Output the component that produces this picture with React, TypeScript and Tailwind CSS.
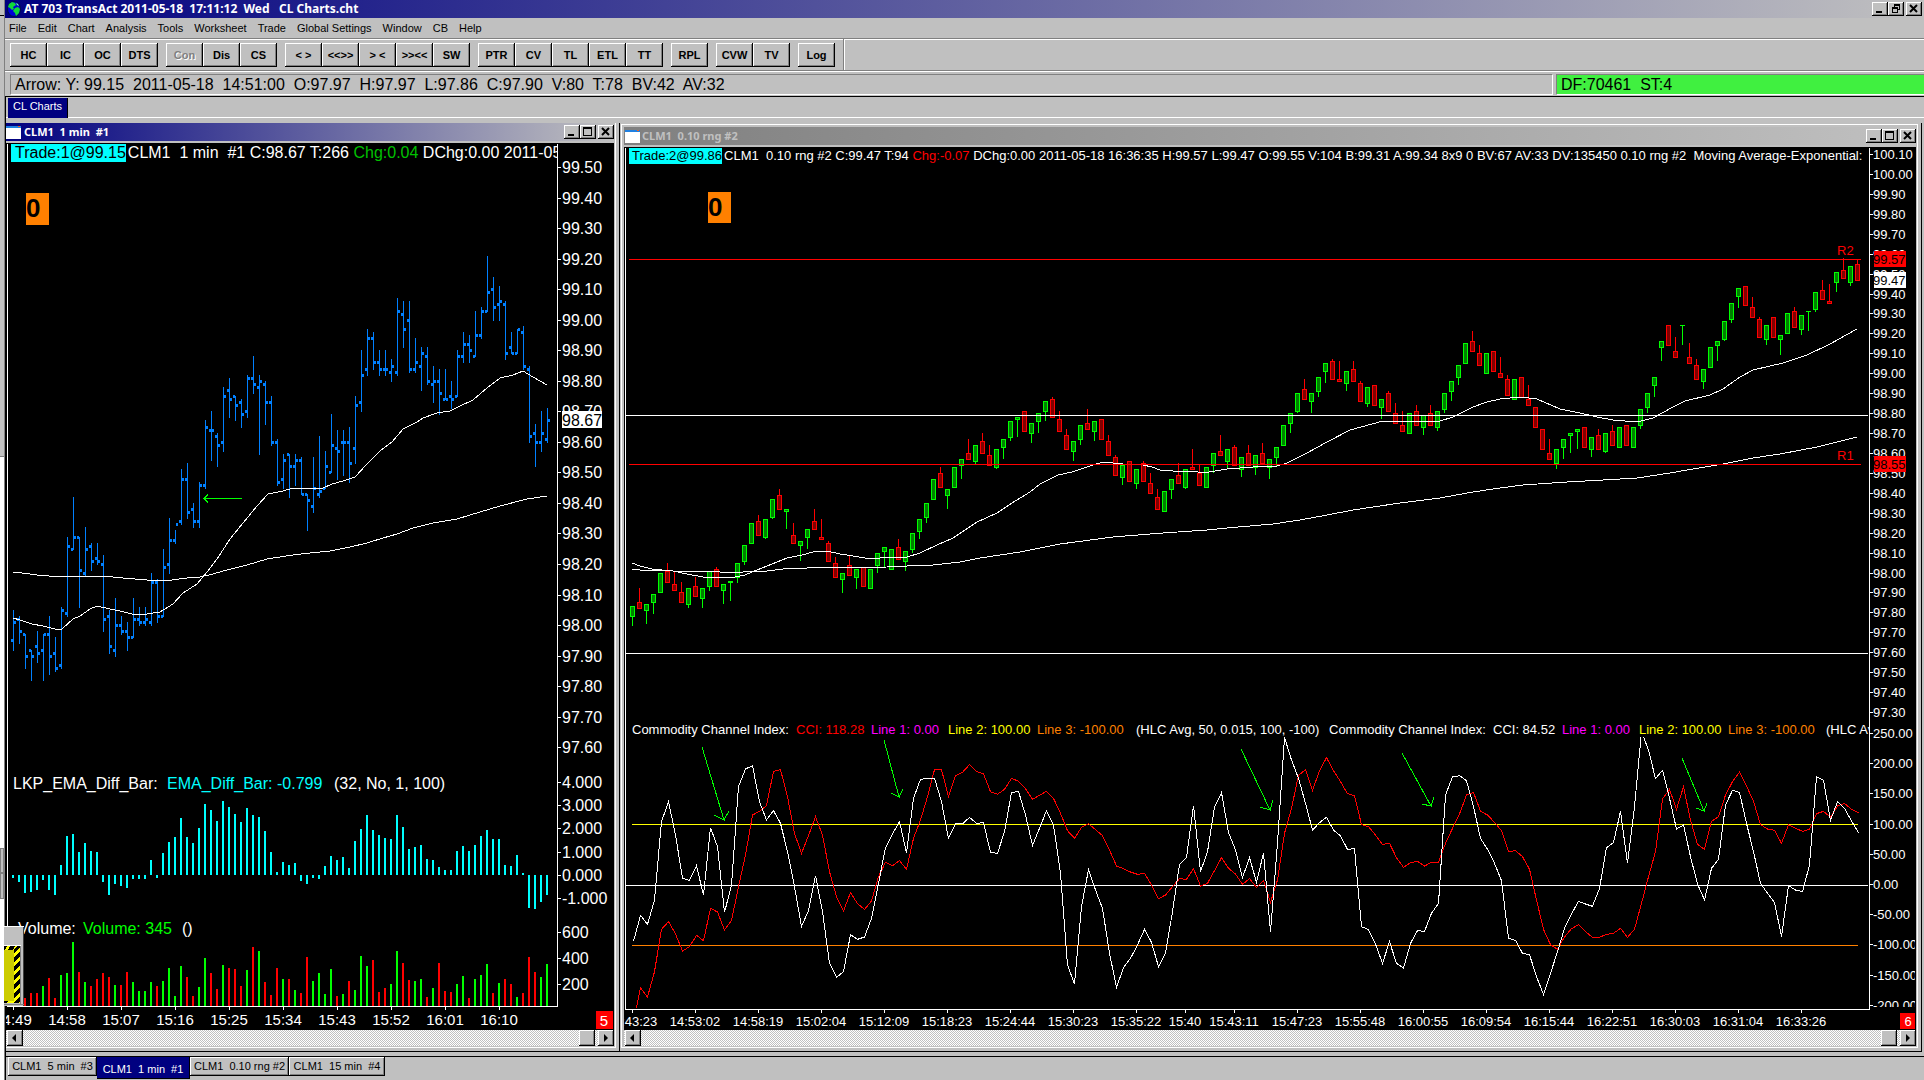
import React from 'react';

type Point = [number, number];

const BLUE = '#0080ff';
const CYAN = '#00ffff';
const RED = '#ff0000';
const GREEN = '#00ff00';

const MENU = ['File', 'Edit', 'Chart', 'Analysis', 'Tools', 'Worksheet', 'Trade', 'Global Settings', 'Window', 'CB', 'Help'];

const TOOLBAR = [
  ['HC', 'IC', 'OC', 'DTS'],
  ['Con', 'Dis', 'CS'],
  ['< >', '<<>>', '> <', '>><<', 'SW'],
  ['PTR', 'CV', 'TL', 'ETL', 'TT'],
  ['RPL'],
  ['CVW', 'TV'],
  ['Log'],
];

// open, high, low, close in ticks of 0.01
const MINUTE_BARS = [
  [9795, 9805, 9792, 9801], [9802, 9803, 9794, 9798], [9797, 9797, 9786, 9790], [9792, 9792, 9782, 9790], [9793, 9798, 9788, 9791],
  [9792, 9797, 9782, 9797], [9797, 9803, 9784, 9790], [9791, 9796, 9785, 9786], [9787, 9806, 9786, 9805], [9804, 9829, 9803, 9826],
  [9825, 9842, 9825, 9829], [9829, 9829, 9806, 9818], [9817, 9832, 9816, 9825], [9826, 9827, 9818, 9821], [9822, 9827, 9820, 9821],
  [9820, 9823, 9798, 9802], [9803, 9805, 9791, 9793], [9792, 9809, 9790, 9800], [9800, 9803, 9797, 9798], [9798, 9801, 9792, 9796],
  [9796, 9809, 9796, 9802], [9802, 9806, 9800, 9801], [9801, 9806, 9800, 9802], [9801, 9817, 9800, 9814], [9814, 9815, 9801, 9803],
  [9803, 9825, 9803, 9819], [9820, 9835, 9817, 9828], [9828, 9831, 9827, 9833], [9834, 9851, 9833, 9848], [9848, 9853, 9835, 9837],
  [9838, 9840, 9832, 9834], [9834, 9847, 9832, 9846], [9846, 9867, 9845, 9865], [9864, 9870, 9854, 9864], [9862, 9863, 9852, 9859],
  [9860, 9878, 9857, 9875], [9877, 9881, 9868, 9874], [9875, 9875, 9867, 9872], [9873, 9874, 9865, 9869], [9870, 9882, 9868, 9881],
  [9881, 9888, 9876, 9879], [9878, 9882, 9856, 9880], [9879, 9880, 9866, 9873], [9873, 9875, 9859, 9860], [9860, 9861, 9846, 9847],
  [9848, 9856, 9845, 9854], [9856, 9856, 9842, 9852], [9852, 9856, 9846, 9854], [9854, 9855, 9843, 9843], [9843, 9843, 9831, 9841],
  [9839, 9855, 9837, 9845], [9843, 9862, 9842, 9844], [9845, 9857, 9845, 9852], [9850, 9869, 9850, 9859], [9858, 9864, 9848, 9857],
  [9860, 9864, 9849, 9860], [9860, 9865, 9847, 9853], [9858, 9875, 9853, 9872], [9873, 9890, 9870, 9882], [9884, 9897, 9882, 9894],
  [9894, 9896, 9884, 9886], [9886, 9890, 9882, 9884], [9884, 9890, 9882, 9884], [9883, 9887, 9880, 9885], [9883, 9907, 9882, 9903],
  [9902, 9906, 9891, 9897], [9900, 9906, 9883, 9884], [9884, 9894, 9883, 9886], [9885, 9891, 9877, 9889], [9888, 9891, 9879, 9880],
  [9879, 9885, 9873, 9880], [9880, 9884, 9869, 9876], [9874, 9884, 9874, 9874], [9875, 9880, 9871, 9874], [9875, 9890, 9875, 9888],
  [9888, 9896, 9886, 9892], [9892, 9895, 9886, 9890], [9888, 9903, 9888, 9895], [9895, 9904, 9894, 9903], [9903, 9921, 9903, 9909],
  [9910, 9914, 9900, 9904], [9905, 9911, 9900, 9906], [9905, 9906, 9887, 9889], [9891, 9896, 9889, 9889], [9889, 9897, 9889, 9897],
  [9896, 9898, 9884, 9885], [9884, 9885, 9860, 9862], [9863, 9866, 9852, 9860], [9860, 9870, 9857, 9863], [9861, 9871, 9860, 9867],
];

const MINUTE_FAST: Point[] = [
  [13, 618], [20, 620], [32, 624], [43, 626], [55, 629], [62, 629], [73, 619], [80, 616], [90, 609], [97, 606], [110, 609], [120, 611],
  [132, 614], [147, 614], [160, 612], [173, 604], [183, 593], [197, 584], [207, 572], [217, 559], [230, 539], [243, 523], [257, 506],
  [268, 494], [283, 491], [293, 488], [323, 488], [332, 484], [343, 481], [355, 477], [367, 464], [380, 451], [392, 442], [403, 429],
  [417, 422], [423, 418], [437, 413], [450, 411], [460, 406], [473, 400], [487, 388], [500, 378], [513, 375], [523, 371], [533, 377], [547, 385],
];

const MINUTE_SLOW: Point[] = [
  [13, 572], [22, 573], [37, 575], [60, 577], [77, 576], [103, 576], [123, 578], [147, 580], [172, 580], [187, 578], [200, 577], [213, 574],
  [223, 571], [247, 565], [267, 559], [293, 555], [310, 553], [330, 551], [350, 547], [367, 543], [383, 538], [397, 534], [413, 528],
  [433, 523], [457, 519], [480, 512], [500, 506], [527, 499], [547, 496],
];

const EMA_DIFF = [
  -3, -7, -18, -17, -15, -5, -15, -20, 10, 39, 41, 23, 32, 24, 23, -7, -20, -9, -11, -13, -4, -4, -4, 15, -3, 22, 33, 38, 57, 38,
  32, 47, 71, 65, 54, 74, 68, 61, 53, 67, 60, 58, 44, 23, 3, 13, 10, 12, -6, -9, -3, -4, 9, 19, 15, 18, 7, 34, 46, 60,
  45, 40, 37, 36, 60, 48, 26, 28, 30, 16, 15, 8, 5, 5, 24, 29, 24, 30, 39, 45, 36, 36, 10, 9, 20, 2, -33, -34, -27, -20,
];

// negative values are down bars
const VOLUME = [
  0, 0, -8, -13, -13, 20, -28, -8, 31, 33, 64, -34, 24, -20, -27, -33, -29, 21, -21, -34, 24, 15, 15, 24, -20, 25, 38, 10, 40, -29,
  -10, 19, 48, -33, -17, 41, -38, -37, -20, 36, -59, 55, -24, -11, -38, 27, -27, 16, -13, -49, 25, 33, 12, 37, -10, 12, -25, 16, 50, 40,
  -46, -14, -18, 22, 55, -43, -26, 25, 27, -9, 18, -43, -15, -14, 22, 30, -8, 27, 31, 42, -13, 23, -27, -22, 9, -13, -49, -34, 29, 42,
];

// open, close; every range bar spans exactly 10 ticks
const RANGE_BARS: Point[] = [
  [9778, 9783], [9785, 9782], [9781, 9784], [9785, 9789], [9790, 9800], [9801, 9795], [9794, 9791], [9790, 9785], [9784, 9792], [9793, 9788],
  [9787, 9792], [9793, 9801], [9802, 9793], [9791, 9794], [9795, 9796], [9798, 9805], [9806, 9814], [9815, 9825], [9826, 9819], [9818, 9827],
  [9828, 9837], [9839, 9832], [9831, 9832], [9819, 9815], [9814, 9816], [9818, 9822], [9826, 9822], [9818, 9817], [9815, 9806], [9805, 9798],
  [9797, 9800], [9804, 9799], [9798, 9802], [9803, 9793], [9792, 9802], [9804, 9810], [9811, 9813], [9802, 9812], [9813, 9807], [9806, 9811],
  [9812, 9820], [9821, 9827], [9828, 9835], [9837, 9847], [9850, 9843], [9839, 9842], [9843, 9853], [9854, 9857], [9860, 9857], [9856, 9864],
  [9866, 9860], [9859, 9854], [9853, 9862], [9863, 9867], [9868, 9876], [9877, 9878], [9881, 9871], [9870, 9875], [9876, 9880], [9881, 9886],
  [9887, 9878], [9877, 9871], [9869, 9862], [9861, 9866], [9867, 9874], [9875, 9872], [9871, 9876], [9877, 9867], [9866, 9859], [9858, 9849],
  [9848, 9854], [9856, 9846], [9845, 9852], [9855, 9846], [9845, 9840], [9838, 9832], [9831, 9841], [9842, 9847], [9849, 9845], [9843, 9852],
  [9853, 9852], [9850, 9844], [9843, 9853], [9854, 9860], [9861, 9859], [9856, 9862], [9863, 9854], [9852, 9858], [9860, 9854], [9853, 9859],
  [9860, 9855], [9853, 9857], [9858, 9863], [9864, 9874], [9875, 9880], [9881, 9890], [9892, 9887], [9886, 9890], [9891, 9898], [9901, 9905],
  [9906, 9897], [9897, 9896], [9895, 9901], [9902, 9896], [9895, 9886], [9885, 9893], [9894, 9884], [9883, 9887], [9890, 9881], [9880, 9875],
  [9874, 9871], [9870, 9880], [9881, 9874], [9873, 9879], [9880, 9874], [9873, 9881], [9882, 9890], [9891, 9896], [9898, 9904], [9905, 9915],
  [9916, 9911], [9910, 9904], [9900, 9910], [9911, 9901], [9900, 9898], [9897, 9889], [9887, 9897], [9898, 9888], [9887, 9884], [9883, 9873],
  [9872, 9862], [9860, 9857], [9855, 9862], [9863, 9867], [9869, 9870], [9871, 9872], [9873, 9863], [9862, 9868], [9869, 9862], [9861, 9870],
  [9871, 9864], [9863, 9873], [9874, 9864], [9863, 9873], [9874, 9882], [9883, 9890], [9894, 9898], [9913, 9916], [9924, 9914], [9911, 9908],
  [9924, 9924], [9908, 9905], [9904, 9897], [9896, 9902], [9903, 9913], [9914, 9916], [9917, 9926], [9927, 9935], [9939, 9943], [9944, 9934],
  [9933, 9928], [9927, 9918], [9917, 9924], [9928, 9918], [9917, 9919], [9920, 9930], [9931, 9923], [9922, 9929], [9931, 9931], [9932, 9941],
  [9942, 9937], [9936, 9935], [9946, 9951], [9952, 9948], [9946, 9954], [9955, 9947],
];

const RANGE_FAST: Point[] = [
  [632, 563], [640, 566], [652, 569], [662, 570], [673, 571], [687, 574], [703, 577], [735, 577], [745, 575], [757, 570], [772, 564],
  [787, 558], [802, 555], [813, 552], [827, 551], [840, 554], [853, 556], [865, 558], [880, 558], [907, 557], [920, 553], [937, 545],
  [953, 538], [977, 522], [997, 513], [1012, 503], [1030, 492], [1040, 484], [1058, 475], [1072, 472], [1090, 466], [1103, 462],
  [1123, 464], [1143, 465], [1152, 467], [1160, 470], [1173, 471], [1193, 471], [1203, 473], [1227, 469], [1253, 467], [1277, 466],
  [1287, 463], [1307, 453], [1327, 442], [1350, 430], [1383, 421], [1403, 422], [1440, 421], [1453, 417], [1473, 407], [1487, 402],
  [1500, 399], [1520, 397], [1537, 399], [1560, 409], [1580, 413], [1597, 417], [1613, 420], [1637, 422], [1653, 418], [1673, 407],
  [1685, 401], [1710, 395], [1723, 389], [1740, 377], [1753, 370], [1783, 363], [1807, 355], [1830, 344], [1857, 329],
];

const RANGE_SLOW: Point[] = [
  [632, 569], [640, 570], [673, 571], [703, 571], [720, 572], [743, 572], [767, 571], [783, 569], [807, 568], [887, 567], [907, 566],
  [933, 565], [960, 562], [980, 558], [1020, 552], [1060, 544], [1113, 537], [1163, 533], [1207, 530], [1227, 528], [1273, 524],
  [1300, 520], [1327, 515], [1353, 510], [1400, 503], [1440, 498], [1473, 492], [1500, 488], [1523, 485], [1567, 482], [1603, 480],
  [1637, 478], [1670, 473], [1687, 470], [1723, 464], [1753, 458], [1780, 454], [1817, 447], [1857, 437],
];

// CCI samples, three units to a plot pixel, measured down from the pane top
const CCI_FAST = [
  724, 646, 673, 600, 365, 305, 405, 535, 541, 497, 585, 383, 440, 637, 555, 260, 207, 197, 305, 360, 332, 370, 455, 560, 679,
  632, 527, 635, 790, 832, 815, 704, 718, 711, 655, 550, 443, 402, 365, 458, 295, 238, 235, 235, 305, 415, 371, 372, 352, 370,
  368, 457, 460, 395, 278, 274, 345, 436, 385, 332, 375, 520, 795, 852, 620, 509, 570, 625, 760, 862, 803, 775, 735, 688, 727,
  800, 760, 635, 493, 472, 317, 515, 455, 322, 278, 397, 450, 533, 473, 547, 459, 695, 430, 112, 180, 235, 310, 390, 368, 352,
  390, 408, 448, 446, 680, 689, 732, 790, 725, 790, 804, 730, 692, 694, 640, 610, 285, 231, 227, 242, 320, 415, 448, 490, 542,
  715, 721, 760, 764, 830, 883, 820, 755, 685, 642, 604, 612, 619, 565, 443, 428, 334, 490, 320, 95, 150, 236, 211, 295, 387,
  375, 470, 552, 600, 505, 478, 315, 271, 277, 370, 455, 550, 580, 607, 710, 557, 570, 575, 495, 230, 241, 361, 305, 325, 363, 398,
];

const CCI_SLOW = [
  970, 863, 891, 815, 688, 665, 702, 753, 740, 706, 722, 625, 636, 690, 662, 560, 465, 345, 334, 317, 214, 209, 290, 400, 460,
  407, 350, 405, 515, 590, 633, 578, 611, 628, 603, 530, 487, 497, 482, 508, 415, 360, 290, 209, 209, 290, 227, 217, 194, 214,
  222, 275, 283, 268, 235, 244, 266, 298, 286, 274, 295, 340, 392, 415, 382, 371, 389, 407, 450, 498, 506, 516, 523, 520, 555,
  596, 585, 560, 536, 538, 506, 558, 550, 512, 473, 505, 522, 553, 536, 562, 541, 607, 540, 400, 325, 226, 209, 271, 212, 173,
  212, 245, 281, 287, 374, 380, 405, 433, 430, 473, 502, 488, 484, 498, 487, 487, 430, 385, 342, 285, 277, 334, 345, 367, 392,
  455, 452, 470, 508, 600, 688, 734, 748, 711, 686, 674, 695, 712, 712, 703, 700, 685, 712, 688, 610, 530, 455, 297, 268, 328,
  260, 360, 433, 448, 364, 350, 285, 245, 217, 258, 304, 374, 387, 391, 430, 374, 385, 394, 388, 341, 334, 352, 318, 310, 328, 338,
];

// tail, tip, left wing, right wing
const ARROWS: Point[][] = [
  [[702, 747], [724, 820], [714, 815], [729, 811]],
  [[884, 740], [899, 797], [891, 793], [903, 789]],
  [[1241, 749], [1270, 810], [1260, 807], [1273, 800]],
  [[1402, 753], [1431, 806], [1422, 804], [1434, 797]],
  [[1682, 758], [1704, 811], [1696, 808], [1707, 803]],
];

const RANGE_TIMES: [number, string][] = [
  [632, '14:43:23'], [695, '14:53:02'], [758, '14:58:19'], [821, '15:02:04'], [884, '15:12:09'], [947, '15:18:23'], [1010, '15:24:44'],
  [1073, '15:30:23'], [1136, '15:35:22'], [1185, '15:40'], [1234, '15:43:11'], [1297, '15:47:23'], [1360, '15:55:48'], [1423, '16:00:55'],
  [1486, '16:09:54'], [1549, '16:15:44'], [1612, '16:22:51'], [1675, '16:30:03'], [1738, '16:31:04'], [1801, '16:33:26'],
];

const MINUTE_TIMES = ['14:49', '14:58', '15:07', '15:16', '15:25', '15:34', '15:43', '15:52', '16:01', '16:10'];

const CCI_LABELS: [number, string, string][] = [
  [632, '#fff', 'Commodity Channel Index:'],
  [796, RED, 'CCI: 118.28'],
  [871, '#ff00ff', 'Line 1: 0.00'],
  [948, '#ffff00', 'Line 2: 100.00'],
  [1037, '#ff8000', 'Line 3: -100.00'],
  [1136, '#fff', '(HLC Avg, 50, 0.015, 100, -100)'],
  [1329, '#fff', 'Commodity Channel Index:'],
  [1493, '#fff', 'CCI: 84.52'],
  [1562, '#ff00ff', 'Line 1: 0.00'],
  [1639, '#ffff00', 'Line 2: 100.00'],
  [1728, '#ff8000', 'Line 3: -100.00'],
  [1826, '#fff', '(HLC Avg, 14, 0.015, 100, -100)'],
];

const toPoints = (pts: Point[]) => pts.map((p) => p.join(',')).join(' ');
const cciPoints = (values: number[]) => values.map((v, i) => `${633.5 + i * 7},${700 + v / 3}`).join(' ');
const minuteY = (tick: number) => Math.round(167 + (9950 - tick) * 3.054);
const rangeY = (tick: number) => Math.round(154 + (10010 - tick) * 1.993);

const raised = 'bg-[#c0c0c0] shadow-[inset_-1px_-1px_#000,inset_1px_1px_#fff,inset_-2px_-2px_#808080]';

const CaptionButton: React.FC<{ kind: 'Minimize' | 'Maximize' | 'Restore' | 'Close'; className?: string }> = ({ kind, className = '' }) => (
  <button type="button" aria-label={kind} className={`${raised} h-[14px] w-4 shrink-0 ${className}`}>
    <svg viewBox="0 0 16 14" className="block h-full w-full" shapeRendering="crispEdges">
      {kind === 'Minimize' && <rect x="4" y="9" width="6" height="2" />}
      {kind === 'Maximize' && <path d="M3 2h9v9H3zM4 4v6h7V4z" fillRule="evenodd" />}
      {kind === 'Restore' && (
        <path d="M6 2h6v6h-2v-1h1V4H7v1H6zM4 5h6v6H4zM5 7v3h4V7z" fillRule="evenodd" />
      )}
      {kind === 'Close' && <path d="M4 3l7 7M11 3l-7 7" stroke="#000" strokeWidth="2" shapeRendering="auto" />}
    </svg>
  </button>
);

const WindowIcon = () => (
  <svg viewBox="0 0 15 13" className="h-[13px] w-[15px] shrink-0" shapeRendering="crispEdges">
    <rect width="15" height="13" fill="#fff" />
    <rect width="15" height="2" fill="#2080e0" />
    <rect x="12" y="0" width="2" height="1" fill="#f06020" />
  </svg>
);

const GlobeIcon = () => (
  <svg viewBox="0 0 14 16" className="h-4 w-[14px] shrink-0">
    <ellipse cx="7" cy="8" rx="6.5" ry="7.5" fill="#0000d8" stroke="#001040" />
    <path d="M2 3l3-2 3 1 1 2-3 2 1 2-2 1-2-2-2-1zM8 7l3-1 2 2-1 4-3 3-1-3-2-2z" fill="#10d838" />
    <path d="M9 2l2 1 1 2-2-1z" fill="#80ffa0" />
  </svg>
);

const ScrollBar: React.FC<{ label: string }> = ({ label }) => (
  <div aria-label={label} className="flex h-4 bg-[#c0c0c0] bg-[repeating-conic-gradient(#fff_0_25%,#c0c0c0_0_50%)] bg-[length:2px_2px] pl-px">
    <button type="button" aria-label="Scroll left" className={`${raised} h-4 w-4`}>
      <svg viewBox="0 0 16 16" className="block"><path d="M9 4v8L5 8z" /></svg>
    </button>
    <div className={`${raised} ml-auto mr-[3px] h-4 w-4`} />
    <button type="button" aria-label="Scroll right" className={`${raised} h-4 w-4`}>
      <svg viewBox="0 0 16 16" className="block"><path d="M6 4v8l4-4z" /></svg>
    </button>
  </div>
);

const HazardButton = () => (
  <svg viewBox="0 0 20 80" className="absolute bottom-6 -left-[2px] h-20 w-5" shapeRendering="crispEdges">
    <rect width="20" height="80" fill="#c0c0c0" />
    <rect x="19" width="1" height="80" fill="#404040" />
    <rect width="20" height="1" fill="#fff" />
    <rect y="19" width="17" height="1" fill="#fff" />
    <rect y="20" width="16" height="57" fill="#ffff00" />
    <path d="M0 20h3l-2 4H0zM6 20h5l-2 4H4zM14 20h2v2l-6 5v-4zM16 26v5l-6 5v-5zM16 35v5l-6 5v-5zM16 44v5l-6 5v-5zM16 53v5l-6 5v-5zM16 62v5l-6 5v-5zM16 71v5l-2 1h-4v-1zM0 75h4l-1 2H0z" />
    <rect y="24" width="10" height="51" fill="#cccc00" />
    <rect x="16" y="20" width="1" height="59" fill="#808080" />
    <rect y="78" width="20" height="1" fill="#808080" />
  </svg>
);

const MinuteChart = () => (
  <svg viewBox="6 143 608 887" className="block w-full bg-black" shapeRendering="crispEdges">
    <rect x="7" y="144" width="1" height="863" fill="#fff" />
    <rect x="557" y="144" width="1" height="863" fill="#fff" />
    <rect x="7" y="1006" width="551" height="1" fill="#fff" />

    <rect x="26" y="193" width="23" height="32" fill="#ff8000" />
    <text x="26" y="217" fontSize="26" fontWeight="bold">0</text>

    {MINUTE_BARS.map(([open, high, low, close], i) => (
      <g key={i} fill={BLUE}>
        <rect x={13 + i * 6} y={minuteY(high)} width="1" height={minuteY(low) - minuteY(high) + 1} />
        <rect x={11 + i * 6} y={minuteY(open) - 1} width="2" height="3" />
        <rect x={14 + i * 6} y={minuteY(close) - 1} width="2" height="3" />
      </g>
    ))}
    <polyline points={toPoints(MINUTE_FAST)} fill="none" stroke="#fff" />
    <polyline points={toPoints(MINUTE_SLOW)} fill="none" stroke="#fff" />
    <path d="M242 498.5H204M208 494.5l-4 4 4 4" fill="none" stroke={GREEN} />

    {EMA_DIFF.map((h, i) => (
      <rect key={i} x={12 + i * 6} y={h > 0 ? 875 - h : 875} width="2" height={Math.abs(h)} fill={CYAN} />
    ))}
    {VOLUME.map((v, i) => (
      <rect key={i} x={12 + i * 6} y={1006 - Math.abs(v)} width="2" height={Math.abs(v)} fill={v < 0 ? RED : GREEN} />
    ))}

    <g fontSize="16" fill="#fff">
      <text x="13" y="789">LKP_EMA_Diff_Bar:</text>
      <text x="167" y="789" fill={CYAN}>EMA_Diff_Bar: -0.799</text>
      <text x="334" y="789">(32, No, 1, 100)</text>
      <text x="18" y="934">Volume:</text>
      <text x="83" y="934" fill={GREEN}>Volume: 345</text>
      <text x="182" y="934">()</text>

      {Array.from({ length: 20 }).map((_, i) => (
        <g key={i}>
          <rect x="558" y={minuteY(9950 - i * 10)} width="3" height="1" />
          <text x="562" y={minuteY(9950 - i * 10) + 6}>{((9950 - i * 10) / 100).toFixed(2)}</text>
        </g>
      ))}
      {[4, 3, 2, 1, 0, -1].map((v) => (
        <g key={v}>
          <rect x="558" y={Math.round(875 - v * 23.3)} width="3" height="1" />
          <text x="562" y={Math.round(875 - v * 23.3) + 6}>{v.toFixed(3)}</text>
        </g>
      ))}
      {[600, 400, 200].map((v) => (
        <g key={v}>
          <rect x="558" y={1010 - v * 0.13} width="3" height="1" />
          <text x="562" y={1010 - v * 0.13 + 6}>{v}</text>
        </g>
      ))}
    </g>
    <rect x="562" y="411" width="40" height="17" fill="#fff" />
    <text x="562" y="426" fontSize="16">98.67</text>

    {MINUTE_TIMES.map((t, i) => (
      <g key={t} fill="#fff" fontSize="15">
        <rect x={13 + i * 54} y="1007" width="1" height="3" />
        <text x={13 + i * 54} y="1025" textAnchor="middle">{t}</text>
      </g>
    ))}
    <rect x="596" y="1011" width="17" height="18" fill={RED} />
    <text x="604" y="1026" fontSize="15" textAnchor="middle" fill="#fff">5</text>
  </svg>
);

const RangeChart = () => (
  <svg viewBox="624 147 1292 883" className="block w-full bg-black" shapeRendering="crispEdges">
    <defs>
      <clipPath id="cci-pane"><rect x="626" y="737" width="1243" height="271" /></clipPath>
      <clipPath id="cci-header"><rect x="626" y="720" width="1243" height="20" /></clipPath>
      <clipPath id="range-axis"><rect x="1869" y="148" width="46" height="859" /></clipPath>
    </defs>
    <rect x="625" y="148" width="1" height="862" fill="#fff" />
    <rect x="1869" y="148" width="1" height="862" fill="#fff" />
    <rect x="625" y="1009" width="1245" height="1" fill="#fff" />

    <rect x="708" y="192" width="23" height="31" fill="#ff8000" />
    <text x="708" y="216" fontSize="26" fontWeight="bold">0</text>

    {RANGE_BARS.map(([open, close], i) => {
      const up = close >= open;
      const high = up ? close : close + 10;
      const top = rangeY(Math.max(open, close));
      const bottom = rangeY(Math.min(open, close));
      const x = 632 + i * 7;
      return (
        <g key={i} fill={up ? GREEN : RED}>
          <rect x={x} y={rangeY(high)} width="1" height="20" />
          <rect x={x - 2} y={top} width="5" height={bottom - top + 1} />
          {bottom - top > 1 && (
            <rect x={x - 1} y={top + 1} width="3" height={bottom - top - 1} fill={up ? '#008000' : '#800000'} />
          )}
        </g>
      );
    })}
    <rect x="626" y="415" width="1242" height="1" fill="#fff" />
    <rect x="626" y="653" width="1242" height="1" fill="#fff" />
    <polyline points={toPoints(RANGE_FAST)} fill="none" stroke="#fff" />
    <polyline points={toPoints(RANGE_SLOW)} fill="none" stroke="#fff" />
    <g fill={RED} fontSize="13">
      <rect x="629" y="259" width="1232" height="1" />
      <rect x="629" y="464" width="1232" height="1" />
      <text x="1837" y="255">R2</text>
      <text x="1837" y="460">R1</text>
    </g>

    <rect x="632" y="824" width="1226" height="1" fill="#ffff00" />
    <rect x="626" y="885" width="1242" height="1" fill="#fff" />
    <rect x="632" y="945" width="1226" height="1" fill="#ff8000" />
    <g clipPath="url(#cci-pane)" fill="none">
      <polyline points={cciPoints(CCI_SLOW)} stroke={RED} />
      <polyline points={cciPoints(CCI_FAST)} stroke="#fff" />
    </g>
    {ARROWS.map(([tail, tip, left, right]) => (
      <polyline key={tip[0]} points={toPoints([tail, tip, left, tip, right])} fill="none" stroke={GREEN} />
    ))}
    <g clipPath="url(#cci-header)" fontSize="13">
      {CCI_LABELS.map(([x, fill, label]) => (
        <text key={x} x={x} y="734" fill={fill}>{label}</text>
      ))}
    </g>

    <g fontSize="13" fill="#fff" clipPath="url(#range-axis)">
      {Array.from({ length: 29 }).map((_, i) => (
        <g key={i}>
          <rect x="1870" y={rangeY(10010 - i * 10)} width="3" height="1" />
          <text x="1873" y={rangeY(10010 - i * 10) + 5}>{((10010 - i * 10) / 100).toFixed(2)}</text>
        </g>
      ))}
      {[250, 200, 150, 100, 50, 0, -50, -100, -150, -200].map((v) => (
        <g key={v}>
          <rect x="1870" y={Math.round(884 - v * 0.604)} width="3" height="1" />
          <text x="1873" y={Math.round(884 - v * 0.604) + 5}>{v.toFixed(2)}</text>
        </g>
      ))}
    </g>
    <g fontSize="13">
      <rect x="1874" y="251" width="32" height="16" fill={RED} />
      <text x="1873" y="264">99.57</text>
      <rect x="1874" y="272" width="32" height="16" fill="#fff" />
      <text x="1873" y="285">99.47</text>
      <rect x="1874" y="456" width="32" height="16" fill={RED} />
      <text x="1873" y="469">98.55</text>
    </g>

    {RANGE_TIMES.map(([x, t]) => (
      <g key={t} fill="#fff" fontSize="13">
        <rect x={x} y="1010" width="1" height="3" />
        <text x={x} y="1026" textAnchor="middle">{t}</text>
      </g>
    ))}
    <rect x="1900" y="1013" width="15" height="16" fill={RED} />
    <text x="1908" y="1026" fontSize="13" textAnchor="middle" fill="#fff">6</text>
  </svg>
);

export default function App() {
  return (
    <div className="flex min-h-screen bg-[#c0c0c0] font-['Liberation_Sans',Arial,sans-serif] text-black">
      {/* sliver of the window behind */}
      <div className="flex w-[5px] shrink-0 flex-col border-r border-[#808080] bg-white">
        <div className="h-4 border-b border-black bg-[#c0c0c0]" />
        <div className="h-[441px] border-b border-[#808080] bg-[#c0c0c0]" />
        <div className="h-[391px]" />
        <div className="h-[25px] border border-[#808080] bg-[#c0c0c0]" />
        <div className="h-[26px] border border-[#808080] bg-[#c0c0c0]" />
      </div>

      <main className="min-w-0 flex-1">
        <header className="flex h-[18px] items-center gap-[3px] bg-linear-to-r/srgb from-[#000080] to-[#c0c0c0] pr-[2px] pl-[2px] text-white">
          <GlobeIcon />
          <h1 className="whitespace-pre font-['Noto_Sans',sans-serif] text-xs leading-4 font-bold">
            {'AT 703 TransAct 2011-05-18  17:11:12  Wed   CL Charts.cht'}
          </h1>
          <div className="ml-auto flex">
            <CaptionButton kind="Minimize" />
            <CaptionButton kind="Restore" />
            <CaptionButton kind="Close" className="ml-[2px]" />
          </div>
        </header>

        <nav className="flex h-5 items-center gap-[11px] pl-1 text-[11px]">
          {MENU.map((item) => (
            <button key={item} type="button">{item}</button>
          ))}
        </nav>

        <div className="flex h-[34px] border-t border-[#808080] pt-1 pl-[5px] shadow-[inset_0_1px_#fff,inset_0_-1px_#fff,inset_0_-2px_#808080]">
          {TOOLBAR.map((group) => (
            <div key={group[0]} className="mr-2 flex h-6">
              {group.map((label) => (
                <button
                  key={label}
                  type="button"
                  disabled={label === 'Con'}
                  className={`${raised} w-[37px] text-[11px] font-bold disabled:text-[#808080] disabled:[text-shadow:1px_1px_#fff]`}
                >
                  {label}
                </button>
              ))}
            </div>
          ))}
          <div className="-mt-1 mb-[2px] w-[2px] border-l border-[#808080] bg-white" />
        </div>

        <div className="flex h-6 gap-[3px] pt-[2px] pb-px pl-[5px] text-base">
          <div className="flex-1 overflow-hidden border-t border-r border-b border-l border-t-[#808080] border-r-white border-b-white border-l-[#808080] pl-1 leading-[19px] whitespace-pre">
            {'Arrow: Y: 99.15  2011-05-18  14:51:00  O:97.97  H:97.97  L:97.86  C:97.90  V:80  T:78  BV:42  AV:32'}
          </div>
          <div className="w-[368px] border-t border-b border-l border-t-[#808080] border-b-white border-l-[#808080] bg-[#40f040] pl-1 leading-[19px] whitespace-pre">
            {'DF:70461  ST:4'}
          </div>
        </div>

        <section className="border-l border-black">
          <div className="flex h-[22px] border-t border-b border-t-black border-b-white pt-px pl-[2px]">
            <button type="button" className="h-5 w-[60px] border-r border-black bg-[#000080] pb-1 text-[11px] text-white">CL Charts</button>
          </div>

          <div className="grid grid-cols-[614fr_1302fr] pt-[5px] pr-[2px]">
            <article className="border-r border-b border-black pr-[3px] pb-[3px]">
              <div className="border-r border-b border-white pr-px pb-px">
                <div className="mb-[2px] flex h-[18px] items-center gap-[3px] bg-linear-to-r/srgb from-[#000080] to-[#c0c0c0] text-white">
                  <WindowIcon />
                  <h2 className="whitespace-pre font-['Noto_Sans',sans-serif] text-[11px] leading-4 font-bold">{'CLM1  1 min  #1'}</h2>
                  <div className="ml-auto flex">
                    <CaptionButton kind="Minimize" />
                    <CaptionButton kind="Maximize" />
                    <CaptionButton kind="Close" className="ml-[2px]" />
                  </div>
                </div>
                <div className="relative">
                  <MinuteChart />
                  <p className="absolute top-px right-[57px] left-[5px] flex overflow-hidden text-base leading-[18px] whitespace-pre text-white">
                    <span className="mr-[2px] bg-[#00ffff] pl-1 text-black">Trade:1@99.15</span>
                    {'CLM1  1 min  #1 C:98.67 T:266 '}
                    <span className="text-[#00c000]">Chg:0.04 </span>
                    {'DChg:0.00 2011-05-18'}
                  </p>
                  <HazardButton />
                </div>
                <ScrollBar label="Scroll 1 min chart" />
              </div>
            </article>

            <article className="border-r border-b border-black pt-px pr-[3px] pb-[3px] pl-px">
              <div className="border border-white pt-[2px] pr-px pb-px pl-[2px]">
                <div className="mb-[2px] flex h-[18px] items-center gap-[2px] bg-linear-to-r/srgb from-[#808080] to-[#c0c0c0] pl-px text-[#c0c0c0]">
                  <WindowIcon />
                  <h2 className="whitespace-pre font-['Noto_Sans',sans-serif] text-[11px] leading-4 font-bold">{'CLM1  0.10 rng #2'}</h2>
                  <div className="ml-auto flex">
                    <CaptionButton kind="Minimize" />
                    <CaptionButton kind="Maximize" />
                    <CaptionButton kind="Close" className="ml-[2px]" />
                  </div>
                </div>
                <div className="relative">
                  <RangeChart />
                  <p className="absolute top-px right-[47px] left-[5px] flex overflow-hidden text-[13px] leading-4 whitespace-pre text-white">
                    <span className="mr-[2px] bg-[#00ffff] pl-[3px] text-black">Trade:2@99.86</span>
                    {'CLM1  0.10 rng #2 C:99.47 T:94 '}
                    <span className="text-[#ff0000]">Chg:-0.07 </span>
                    {'DChg:0.00 2011-05-18 16:36:35 H:99.57 L:99.47 O:99.55 V:104 B:99.31 A:99.34 8x9 0 BV:67 AV:33 DV:135450 0.10 rng #2  Moving Average-Exponential:'}
                  </p>
                </div>
                <ScrollBar label="Scroll range chart" />
              </div>
            </article>
          </div>

          <div className="mt-1 flex h-6 items-start border-t border-black pl-[2px] text-[11px] whitespace-pre">
            <button type="button" className={`${raised} h-[19px] w-[89px]`}>{'CLM1  5 min  #3'}</button>
            <button type="button" className="h-[22px] w-[93px] border-r border-b border-black bg-[#000080] pt-1 text-white">{'CLM1  1 min  #1'}</button>
            <button type="button" className={`${raised} h-[19px] w-[99px]`}>{'CLM1  0.10 rng #2'}</button>
            <button type="button" className={`${raised} h-[19px] w-24`}>{'CLM1  15 min  #4'}</button>
          </div>
        </section>
      </main>
    </div>
  );
}
